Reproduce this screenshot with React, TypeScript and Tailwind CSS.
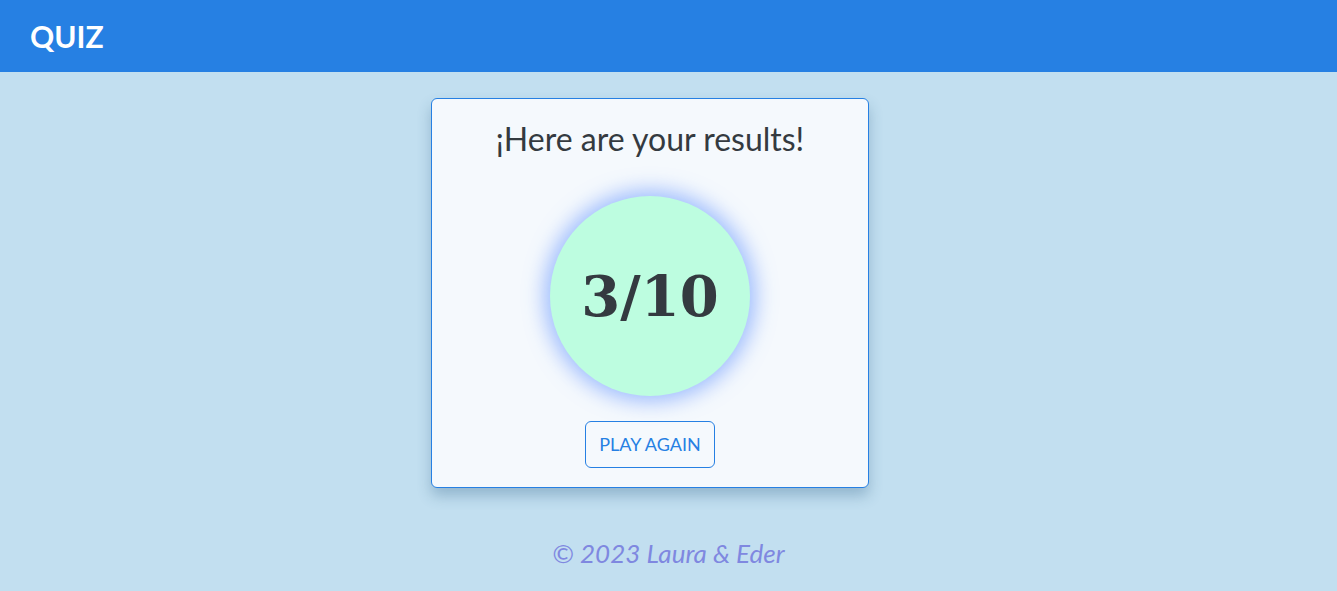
export default function App() {
  return (
    <div className="min-h-[591px] bg-[#c2dff0] font-['Lato','Noto_Sans',sans-serif] flex flex-col">
      <header className="h-[72px] bg-[#2680e3] flex items-center px-[30px]">
        <h1 className="text-white text-[30px] font-bold">QUIZ</h1>
      </header>

      <main className="flex justify-center pt-[26px] pr-[37px]">
        <div className="w-[438px] h-[390px] bg-[#f5f9fd] border border-[#2680e3] rounded-[6px] shadow-[0_8px_14px_rgba(40,90,130,0.3)] flex flex-col items-center pt-[20px]">
          <h2 className="text-[32px] leading-[40px] text-[#343a40]">¡Here are your results!</h2>
          <div className="mt-[37px] w-[200px] h-[200px] rounded-full bg-[#bdfde0] shadow-[0_0_20px_6px_rgba(90,140,255,0.55)] flex items-center justify-center">
            <span className="font-['DejaVu_Serif',serif] font-bold text-[56px] text-[#343a40]">3/10</span>
          </div>
          <button className="mt-[25px] w-[130px] h-[47px] border border-[#2680e3] rounded-[6px] text-[#2680e3] text-[18px]">
            PLAY AGAIN
          </button>
        </div>
      </main>

      <footer className="flex justify-center pt-[46px]">
        <p className="italic text-[26px] text-[#7f88e0]">© 2023 Laura &amp; Eder</p>
      </footer>
    </div>
  );
}
